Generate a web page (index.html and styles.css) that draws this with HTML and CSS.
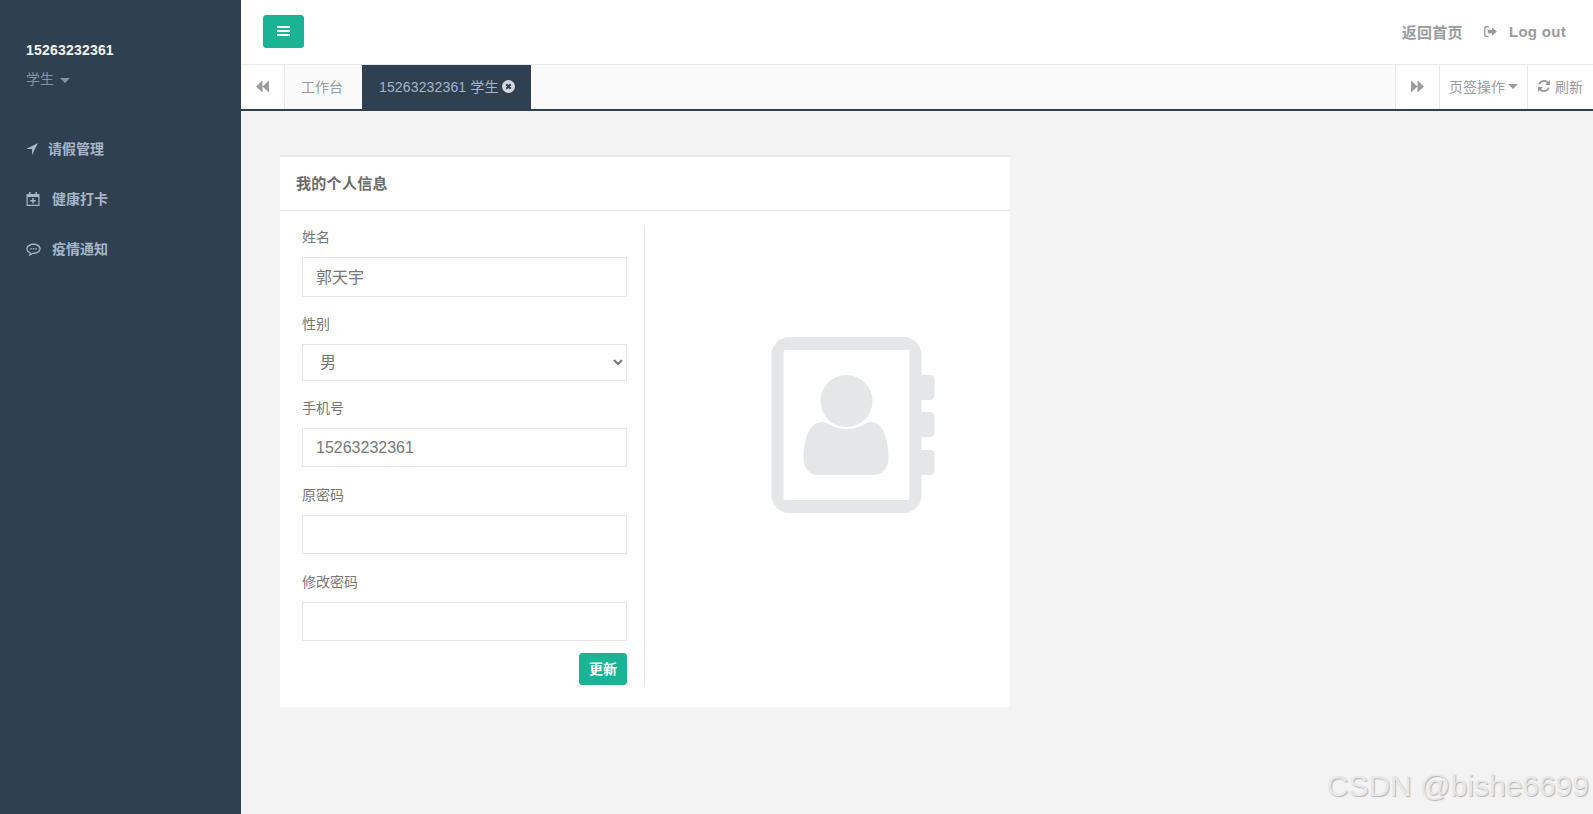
FILE: index.html
```html
<!DOCTYPE html>
<html lang="zh-CN">

<head>
    <meta charset="UTF-8">
    <meta name="viewport" content="width=device-width, initial-scale=1.0">
    <title>我的个人信息</title>
    <link rel="stylesheet" href="styles.css">
</head>

<body>
    <div class="wrapper">
        <nav class="sidebar">
            <div class="profile">
                <div class="profile-name">15263232361</div>
                <div class="profile-role">学生 <span class="caret"></span></div>
            </div>
            <ul class="side-menu">
                <li class="side-item">
                    <svg class="side-icon" viewBox="0 0 12 12"><path d="M12 0 6 12V6H0z" /></svg>
                    <span class="side-text">请假管理</span>
                </li>
                <li class="side-item side-item-wide">
                    <svg class="side-icon" viewBox="0 0 14 14"><path d="M3 0h1.600v2H9.400V0H11v2h2.500v12H.5V2H3zM1.700 5v7.800h10.600V5zM6.300 6h1.400v2.100h2.100v1.300H7.700v2.100H6.300V9.400H4.200V8.100h2.100z" /></svg>
                    <span class="side-text">健康打卡</span>
                </li>
                <li class="side-item side-item-wide">
                    <svg class="side-icon side-icon-comment" viewBox="0 0 14 14"><path fill-rule="evenodd" d="M7 1.500c3.700 0 6.700 2.200 6.700 4.900S10.700 11.300 7 11.300h-1c-1 1-2.300 1.700-3.700 1.800.6-.7 1-1.500 1.100-2.500C1.500 9.800.3 8.200.3 6.400.3 3.700 3.300 1.500 7 1.500zm0 1.200C4 2.700 1.500 4.400 1.500 6.400c0 1.500 1.200 2.700 3.100 3.400 0 .5-.1.800-.2 1.200.5-.3 1-.7 1.400-1h1.200c3 0 5.500-1.600 5.500-3.600S10 2.700 7 2.700zM4 5.600h1.300v1.400H4zm2.400 0h1.300v1.400H6.400zm2.400 0h1.300v1.400H8.800z" /></svg>
                    <span class="side-text">疫情通知</span>
                </li>
            </ul>
        </nav>

        <div class="main">
            <header class="topbar">
                <button class="menu-btn" type="button" aria-label="menu">
                    <span class="menu-line"></span>
                    <span class="menu-line"></span>
                    <span class="menu-line"></span>
                </button>
                <div class="top-links">
                    <a class="top-link">返回首页</a>
                    <a class="top-link logout">
                        <svg class="logout-icon" viewBox="0 0 14 12"><path d="M5 0v1.500H2.500c-.6 0-1 .4-1 1v7c0 .6.4 1 1 1H5V12H2.300C1 12 0 11 0 9.700V2.300C0 1 1 0 2.300 0zM8.500 1.500 14 6l-5.500 4.500V8H4V4h4.500z" /></svg>
                        Log out
                    </a>
                </div>
            </header>

            <div class="tabbar">
                <button class="roll-btn" type="button" aria-label="back">
                    <svg class="roll-icon" viewBox="0 0 13 12"><path d="M6.500 0v12L0 6zM13 0v12L6.500 6z" /></svg>
                </button>
                <a class="tab">工作台</a>
                <a class="tab tab-active">15263232361 学生
                    <svg class="tab-close" viewBox="0 0 13 13"><circle cx="6.500" cy="6.500" r="6.500" /><path d="M4.300 4.300l4.400 4.400m0-4.400L4.300 8.700" stroke="#2f4050" stroke-width="2" /></svg>
                </a>
                <div class="tab-spacer"></div>
                <button class="roll-btn roll-btn-right" type="button" aria-label="forward">
                    <svg class="roll-icon" viewBox="0 0 13 12"><path d="M0 0v12l6.500-6zM6.500 0v12L13 6z" /></svg>
                </button>
                <div class="tab-tool tab-tool-ops">页签操作<span class="caret caret-tool"></span></div>
                <div class="tab-tool tab-tool-refresh">
                    <svg class="refresh-icon" viewBox="0 0 12 12"><path d="M10.200 1.800 12 0v5H7l1.900-1.900A4 4 0 0 0 2.200 4.500H.3a5.800 5.800 0 0 1 9.900-2.700zM1.800 10.200 0 12V7h5L3.100 8.900a4 4 0 0 0 6.700-1.400h1.900a5.800 5.800 0 0 1-9.900 2.700z" /></svg>
                    刷新
                </div>
            </div>

            <main class="content">
                <section class="card">
                    <h5 class="card-title">我的个人信息</h5>
                    <div class="card-body">
                        <form class="info-form">
                            <div class="field">
                                <label class="field-label">姓名</label>
                                <input class="field-input field-input-tall" type="text" value="郭天宇">
                            </div>
                            <div class="field field-select">
                                <label class="field-label">性别</label>
                                <select class="field-input field-input-select">
                                    <option>男</option>
                                    <option>女</option>
                                </select>
                            </div>
                            <div class="field">
                                <label class="field-label">手机号</label>
                                <input class="field-input" type="text" value="15263232361">
                            </div>
                            <div class="field">
                                <label class="field-label">原密码</label>
                                <input class="field-input" type="password">
                            </div>
                            <div class="field field-last">
                                <label class="field-label">修改密码</label>
                                <input class="field-input" type="password">
                            </div>
                            <div class="form-actions">
                                <button class="save-btn" type="button">更新</button>
                            </div>
                        </form>
                        <div class="card-art">
                            <svg class="contact-icon" viewBox="0 0 163 176">
                                <path fill-rule="evenodd" d="M18 0h114c10 0 18 8 18 18v140c0 10-8 18-18 18H18c-10 0-18-8-18-18V18C0 8 8 0 18 0zm-4 13c-1 0-2 1-2 2v146c0 1 1 2 2 2h122c1 0 2-1 2-2V15c0-1-1-2-2-2z" />
                                <path d="M146 38h13c2 0 4 2 4 4v17c0 2-2 4-4 4h-13zM146 75h13c2 0 4 2 4 4v17c0 2-2 4-4 4h-13zM146 113h13c2 0 4 2 4 4v17c0 2-2 4-4 4h-13z" />
                                <circle cx="75" cy="64" r="26" />
                                <path d="M50 85c3 0 5 1 7 2 5 3 11 5 18 5s13-2 18-5c2-1 4-2 7-2 10 0 17 14 17 36 0 10-6 17-15 17H47c-9 0-15-7-15-17 0-22 8-36 18-36z" />
                            </svg>
                        </div>
                    </div>
                </section>
            </main>
        </div>
    </div>
    <div class="watermark">CSDN @bishe6699</div>
</body>

</html>
```

FILE: styles.css
```css
* {
    box-sizing: border-box;
}

html,
body {
    height: 100%;
    margin: 0;
}

body {
    font-family: "Liberation Sans", Arial, "Noto Sans CJK SC", sans-serif;
    font-size: 14px;
    color: #777;
    background-color: #f3f3f3;
    overflow: hidden;
}

button {
    font-family: inherit;
    cursor: pointer;
}

.wrapper {
    display: flex;
    height: 100%;
}

.caret {
    display: inline-block;
    width: 0;
    height: 0;
    margin-left: 2px;
    vertical-align: middle;
    border-top: 5px solid currentColor;
    border-left: 5px solid transparent;
    border-right: 5px solid transparent;
}

/* sidebar */
.sidebar {
    flex: 0 0 241px;
    background-color: #2f4050;
    padding: 40px 0 0 26px;
}

.profile-name {
    font-weight: bold;
    line-height: 20px;
    letter-spacing: .2px;
    color: #f0f3f7;
}

.profile-role {
    margin-top: 9px;
    line-height: 20px;
    color: #8095a8;
}

.side-menu {
    list-style: none;
    margin: 34px 0 0;
    padding: 0;
}

.side-item {
    display: flex;
    align-items: center;
    height: 50px;
    color: #a7b5c9;
    font-weight: bold;
}

.side-icon {
    flex: 0 0 auto;
    width: 12px;
    height: 12px;
    margin: 2px 10px 0 0;
    fill: currentColor;
}

.side-item-wide .side-icon {
    width: 14px;
    height: 14px;
    margin: 1px 12px 0 0;
}

.side-item-wide .side-icon-comment {
    width: 15px;
    height: 15px;
    margin: 2px 11px 0 0;
}

/* top */
.main {
    flex: 1;
    min-width: 0;
    display: flex;
    flex-direction: column;
}

.topbar {
    display: flex;
    justify-content: space-between;
    align-items: center;
    height: 65px;
    padding: 0 27px 2px 22px;
    background-color: #fff;
    border-bottom: 1px solid #e7eaec;
}

.menu-btn {
    display: flex;
    flex-direction: column;
    justify-content: center;
    align-items: center;
    gap: 2px;
    width: 41px;
    height: 33px;
    padding: 0;
    background-color: #1ab394;
    border: 1px solid #1ab394;
    border-radius: 3px;
}

.menu-line {
    width: 13px;
    height: 2px;
    background-color: #fff;
}

.top-links {
    display: flex;
    align-items: center;
    gap: 21px;
}

.top-link {
    font-size: 15px;
    font-weight: bold;
    letter-spacing: .3px;
    color: #999c9e;
}

.logout {
    display: flex;
    align-items: center;
}

.logout-icon {
    width: 13px;
    height: 11px;
    margin-right: 12px;
    fill: currentColor;
}

/* tabs */
.tabbar {
    display: flex;
    height: 46px;
    background-color: #fafafa;
    border-bottom: 2px solid #2f4050;
}

.roll-btn {
    display: flex;
    justify-content: center;
    align-items: center;
    width: 44px;
    padding: 0 0 1px;
    background-color: #fff;
    border: 0;
    border-right: 1px solid #e7eaec;
}

.roll-btn-right {
    border-right: 0;
    border-left: 1px solid #e7eaec;
}

.roll-icon {
    width: 13px;
    height: 13px;
    fill: #999c9e;
}

.tab {
    display: flex;
    align-items: center;
    padding: 0 19px 2px 16px;
    color: #999c9e;
    background-color: #fafafa;
}

.tab-active {
    gap: 3px;
    width: 169px;
    padding: 0 0 2px 17px;
    letter-spacing: .15px;
    color: #a7b5c9;
    background-color: #2f4050;
    white-space: nowrap;
}

.tab-close {
    flex: 0 0 auto;
    width: 13px;
    height: 13px;
    fill: #d3d8e0;
}

.tab-spacer {
    flex: 1;
}

.tab-tool {
    display: flex;
    align-items: center;
    padding-bottom: 2px;
    color: #999c9e;
    background-color: #fff;
    border-left: 1px solid #e7eaec;
}

.tab-tool-ops {
    width: 88px;
    padding-left: 9px;
}

.caret-tool {
    margin-left: 3px;
}

.tab-tool-refresh {
    width: 66px;
    padding-left: 10px;
    gap: 5px;
}

.refresh-icon {
    width: 12px;
    height: 12px;
    fill: currentColor;
}

/* content */
.content {
    flex: 1;
    padding: 44px 0 0 39px;
}

.card {
    width: 730px;
    height: 552px;
    background-color: #fff;
    border-top: 2px solid #e7eaec;
}

.card-title {
    margin: 0;
    height: 54px;
    padding: 0 16px;
    line-height: 54px;
    font-size: 15px;
    font-weight: bold;
    letter-spacing: .3px;
    color: #676a6c;
    border-bottom: 1px solid #e7eaec;
}

.card-body {
    display: flex;
    padding: 16px 0 0 22px;
}

.info-form {
    width: 343px;
    padding-right: 17px;
    border-right: 1px solid #e7e7e7;
}

.field {
    margin-bottom: 18px;
}

.field:first-child {
    margin-bottom: 17px;
}

.field-select {
    margin-bottom: 17px;
}

.field-last {
    margin-bottom: 12px;
}

.field-label {
    display: block;
    line-height: 20px;
    margin-bottom: 10px;
}

.field-input {
    display: block;
    width: 100%;
    height: 39px;
    padding: 0 13px;
    font-family: inherit;
    font-size: 16px;
    color: #777;
    background-color: #fff;
    border: 1px solid #e5e6e7;
    outline: none;
}

.field-input-tall {
    height: 40px;
    padding-bottom: 2px;
}

.field-input-select {
    height: 37px;
    padding-left: 13px;
    border-radius: 0;
}

.form-actions {
    display: flex;
    justify-content: flex-end;
}

.save-btn {
    width: 48px;
    height: 32px;
    padding: 0 0 2px;
    font-size: 14px;
    font-weight: bold;
    color: #fff;
    background-color: #1ab394;
    border: 1px solid #1ab394;
    border-radius: 3px;
}

.card-art {
    flex: 1;
    display: flex;
    padding: 110px 0 0 126px;
}

.contact-icon {
    width: 164px;
    height: 176px;
    fill: #e5e6e8;
}

.watermark {
    position: absolute;
    right: 4px;
    bottom: 11px;
    font-size: 30px;
    line-height: 34px;
    color: #e8e8e8;
    text-shadow: 1px 1px 1px #b4b4b4;
    white-space: nowrap;
}
```
